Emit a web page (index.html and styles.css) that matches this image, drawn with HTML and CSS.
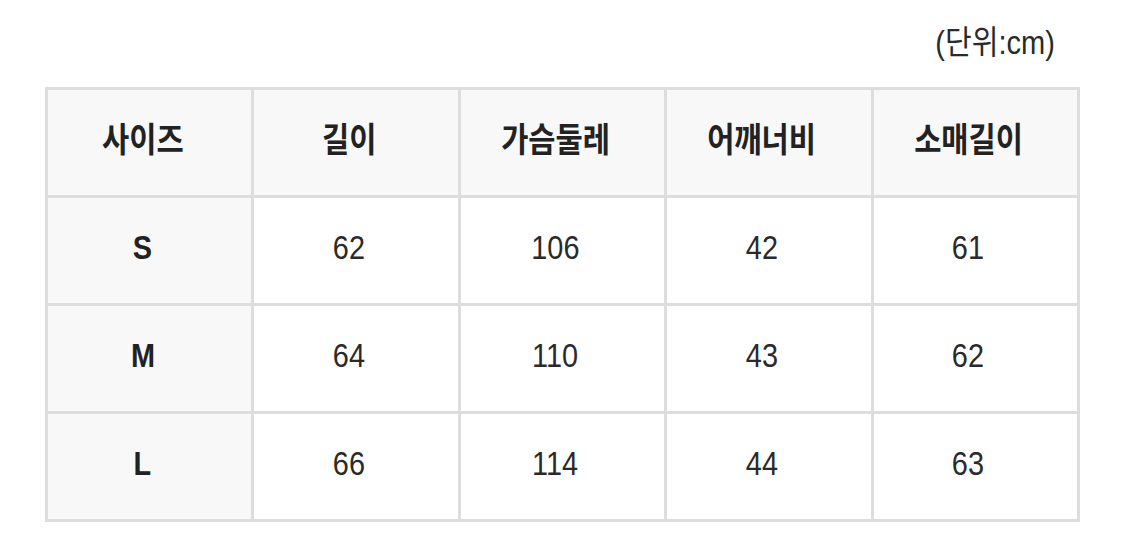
FILE: index.html
```html
<!DOCTYPE html>
<html lang="ko">
<head>
<meta charset="utf-8">
<link rel="stylesheet" href="styles.css">
</head>
<body>
<div class="page">
  <div class="unit"><span class="sq">(단위:cm)</span></div>
  <table class="size-table">
    <tr class="head">
      <th><span class="sq">사이즈</span></th>
      <th><span class="sq">길이</span></th>
      <th><span class="sq">가슴둘레</span></th>
      <th><span class="sq">어깨너비</span></th>
      <th><span class="sq">소매길이</span></th>
    </tr>
    <tr>
      <th class="size"><span class="sq">S</span></th>
      <td><span class="sq">62</span></td>
      <td><span class="sq">106</span></td>
      <td><span class="sq">42</span></td>
      <td><span class="sq">61</span></td>
    </tr>
    <tr>
      <th class="size"><span class="sq">M</span></th>
      <td><span class="sq">64</span></td>
      <td><span class="sq">110</span></td>
      <td><span class="sq">43</span></td>
      <td><span class="sq">62</span></td>
    </tr>
    <tr>
      <th class="size"><span class="sq">L</span></th>
      <td><span class="sq">66</span></td>
      <td><span class="sq">114</span></td>
      <td><span class="sq">44</span></td>
      <td><span class="sq">63</span></td>
    </tr>
  </table>
</div>
</body>
</html>
```
FILE: styles.css
```css
html, body {
  margin: 0;
  padding: 0;
  background: #ffffff;
}
body {
  font-family: "Liberation Sans", "Noto Sans CJK KR", sans-serif;
  color: #222222;
}
.page {
  width: 1125px;
  height: 560px;
  padding: 18px 45px 0 45px;
  box-sizing: border-box;
}
.unit {
  height: 44px;
  display: flex;
  justify-content: flex-end;
  align-items: center;
  padding-right: 25px;
  margin-bottom: 25px;
  font-size: 33px;
  color: #2a2a2a;
}
.sq {
  display: inline-block;
  transform: scaleX(0.85);
}
.unit .sq {
  transform: scaleX(0.88);
  transform-origin: right center;
}
.size-table {
  width: 1035px;
  border-collapse: separate;
  border-spacing: 3px;
  background: #dddddd;
  table-layout: fixed;
}
.size-table th,
.size-table td {
  box-sizing: border-box;
  height: 105px;
  padding: 0 14px 6px 0;
  text-align: center;
  vertical-align: middle;
  background: #ffffff;
}
.size-table td {
  font-size: 34px;
  font-weight: normal;
  color: #2a2a2a;
}
.head th {
  background: #f8f8f8;
  font-size: 34px;
  font-weight: bold;
  font-family: "Noto Sans CJK KR", sans-serif;
  padding-bottom: 10px;
}
.head th .sq {
  transform: scaleX(0.87);
}
.size-table th.size {
  background: #f8f8f8;
  font-size: 34px;
  font-weight: bold;
}
```
